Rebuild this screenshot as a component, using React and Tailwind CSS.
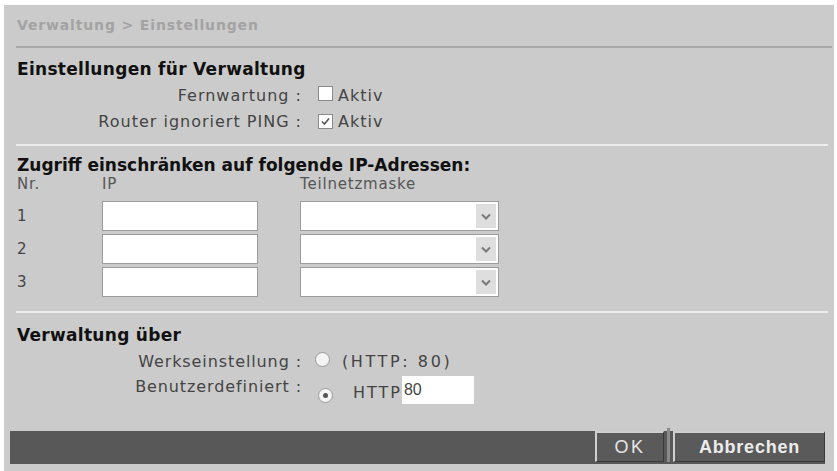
import React from "react";

const font = { fontFamily: '"DejaVu Sans", Verdana, sans-serif' };

function Checkbox({ checked }) {
  return (
    <span className="inline-flex h-[15px] w-[15px] items-center justify-center border border-[#8a8a8a] bg-white">
      {checked && (
        <svg width="11" height="11" viewBox="0 0 11 11">
          <path d="M2 5.5 L4.5 8 L9 2.5" fill="none" stroke="#555" strokeWidth="1.6" />
        </svg>
      )}
    </span>
  );
}

function Radio({ checked }) {
  return (
    <span className="inline-flex h-[15px] w-[15px] items-center justify-center rounded-full border border-[#9a9a9a] bg-[#f4f4f4]">
      {checked && <span className="h-[5px] w-[5px] rounded-full bg-[#555]" />}
    </span>
  );
}

function Select() {
  return (
    <div className="flex h-[30px] w-[199px] items-stretch border border-[#9c9c9c] bg-white p-[2px]">
      <div className="flex-1" />
      <div className="flex w-[20px] items-center justify-center bg-[#dedede]">
        <svg width="10" height="7" viewBox="0 0 10 7">
          <path d="M1 1.5 L5 5.5 L9 1.5" fill="none" stroke="#7a7a7a" strokeWidth="2" />
        </svg>
      </div>
    </div>
  );
}

export default function App() {
  return (
    <div className="h-[471px] w-[837px] bg-white pl-[4px] pt-[5px]" style={font}>
      <div className="flex h-[466px] w-[830px] flex-col bg-[#cbcbcb]">
        {/* Title */}
        <div className="flex h-[41px] items-center pl-[13px] text-[14px] font-bold tracking-[0.85px] text-[#a3a3a3]">
          Verwaltung &gt; Einstellungen
        </div>
        <div className="ml-[12px] mr-[2px] h-[2px] bg-[#a9a9a9]" />

        {/* Section 1 */}
        <div className="pl-[13px] pt-[9px]">
          <div className="flex h-[26px] items-center text-[17px] font-bold tracking-[0.3px] text-[#111]">
            Einstellungen für Verwaltung
          </div>
          <div className="flex h-[26px] items-center text-[16px] text-[#444]">
            <span className="w-[285px] text-right tracking-[1px]">Fernwartung :</span>
            <span className="ml-[16px]"><Checkbox /></span>
            <span className="ml-[5px] tracking-[1px]">Aktiv</span>
          </div>
          <div className="flex h-[26px] items-center text-[16px] text-[#444]">
            <span className="w-[285px] text-right tracking-[1px]">Router ignoriert PING :</span>
            <span className="ml-[16px]"><Checkbox checked /></span>
            <span className="ml-[5px] tracking-[1px]">Aktiv</span>
          </div>
        </div>
        <div className="ml-[12px] mr-[6px] mt-[9px] h-[2px] bg-[#ececec]" />

        {/* Section 2 */}
        <div className="pl-[13px] pt-[8px]">
          <div className="flex h-[23px] items-center text-[17px] font-bold text-[#111]">
            Zugriff einschränken auf folgende IP-Adressen:
          </div>
          <div className="flex h-[14px] items-center text-[15px] tracking-[0.8px] text-[#555]">
            <span className="w-[85px]">Nr.</span>
            <span className="w-[198px]">IP</span>
            <span>Teilnetzmaske</span>
          </div>
          <div className="mt-[10px] flex flex-col gap-[3px]">
            {["1", "2", "3"].map((n) => (
              <div key={n} className="flex h-[30px] items-center text-[15px] text-[#444]">
                <span className="w-[85px]">{n}</span>
                <div className="h-[30px] w-[156px] border border-[#9c9c9c] bg-white" />
                <div className="ml-[42px]"><Select /></div>
              </div>
            ))}
          </div>
        </div>
        <div className="ml-[12px] mr-[6px] mt-[14px] h-[2px] bg-[#ececec]" />

        {/* Section 3 */}
        <div className="pl-[13px] pt-[10px]">
          <div className="flex h-[26px] items-center text-[17px] font-bold tracking-[0.3px] text-[#111]">
            Verwaltung über
          </div>
          <div className="flex h-[26px] items-center text-[16px] text-[#444]">
            <span className="w-[285px] text-right tracking-[0.9px]">Werkseinstellung :</span>
            <span className="ml-[13px]"><Radio /></span>
            <span className="ml-[12px] tracking-[2.6px]">(HTTP: 80)</span>
          </div>
          <div className="flex h-[30px] items-center text-[16px] text-[#444]">
            <span className="w-[285px] -translate-y-[3px] text-right tracking-[0.9px]">Benutzerdefiniert :</span>
            <span className="ml-[16px] translate-y-[3px]"><Radio checked /></span>
            <span className="ml-[20px] translate-y-[3px] tracking-[2px]">HTTP</span>
            <div
              className="flex h-[28px] w-[72px] items-center bg-white pl-[2px] text-[16px] text-[#444]"
              style={{ fontFamily: '"Liberation Sans Narrow", "Liberation Sans", sans-serif' }}
            >
              80
            </div>
          </div>
        </div>

        {/* Bottom bar */}
        <div
          className="ml-[6px] mt-[26px] flex h-[33px] w-[815px] items-start justify-end bg-[#585858]"
          style={{ fontFamily: '"Liberation Sans", Arial, sans-serif' }}
        >
          <button className="flex h-[31px] w-[69px] items-center justify-center border-l-2 border-t-2 border-b border-r border-l-[#cfcfcf] border-t-[#cfcfcf] border-b-[#3a3a3a] border-r-[#3a3a3a] bg-[#5a5a5a] text-[18px] tracking-[2.5px] text-[#e6e6e6]">
            OK
          </button>
          <div className="mx-[3px] -mt-[3px] h-[34px] w-[3px] bg-[#8a8a8a]" />
          <button className="flex h-[31px] w-[152px] items-center justify-center border-l-2 border-t-2 border-b border-r border-l-[#cfcfcf] border-t-[#cfcfcf] border-b-[#3a3a3a] border-r-[#3a3a3a] bg-[#5a5a5a] text-[18px] font-bold tracking-[0.8px] text-[#ececec]">
            Abbrechen
          </button>
        </div>
      </div>
    </div>
  );
}
